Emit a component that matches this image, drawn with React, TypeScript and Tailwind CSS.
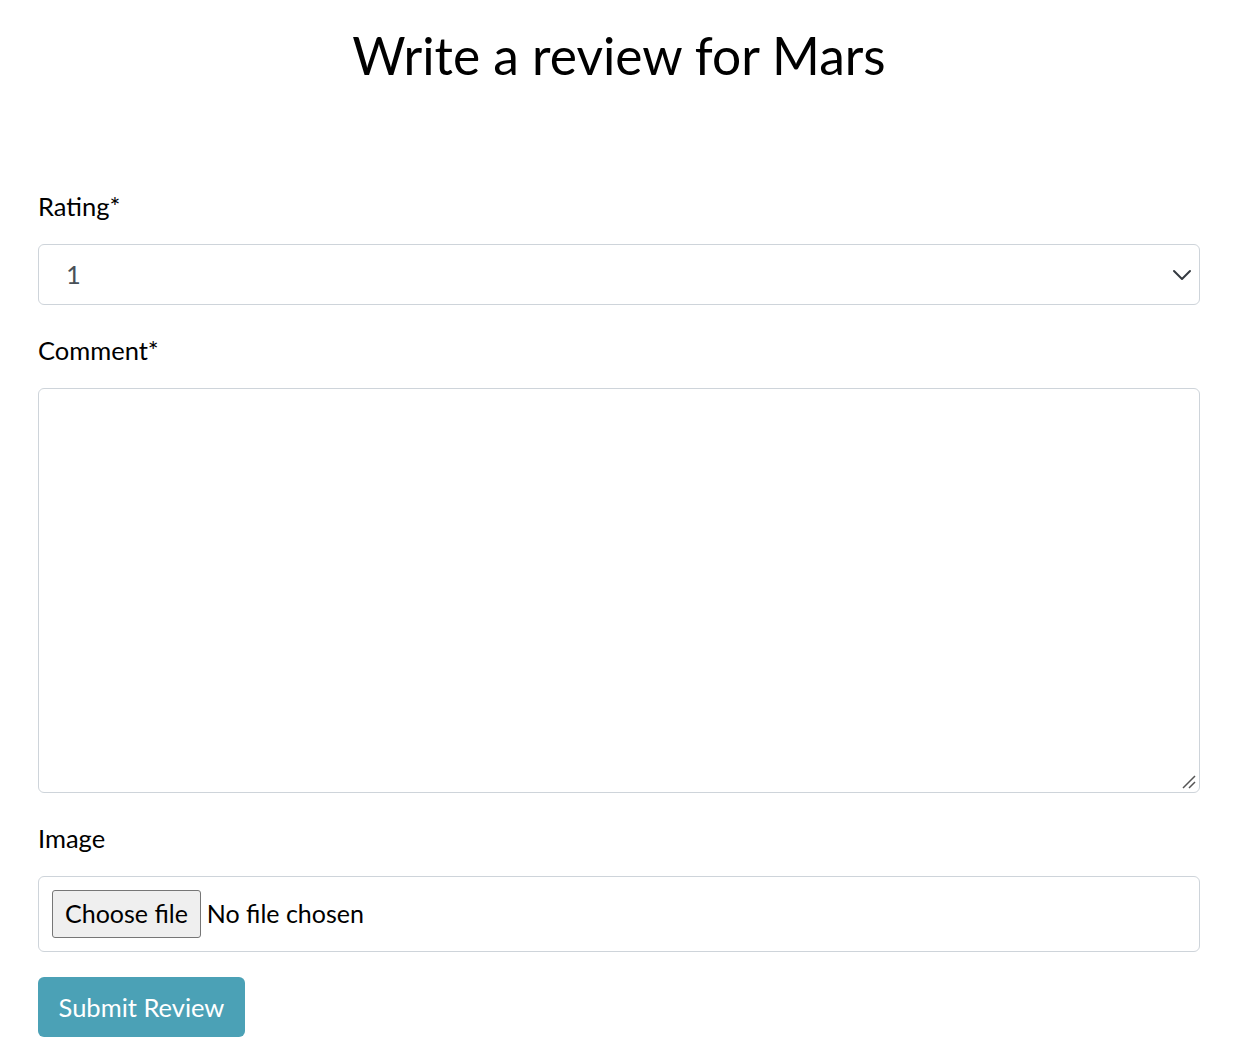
import React from "react";

export default function App() {
  return (
    <div className="min-h-[1060px] bg-white text-black" style={{ fontFamily: "Lato, 'Liberation Sans', sans-serif" }}>
      <div className="pl-[38px] pr-[42px] pt-[24px]">
        <h1 className="text-center text-[51.5px] leading-[62px] font-normal">Write a review for Mars</h1>
        <form className="mt-[102px] flex flex-col">
          <label className="text-[25.5px] leading-[36px]">Rating*</label>
          <div className="mt-[20px] h-[61px] rounded-[6px] border border-[#ced4da] flex items-center justify-between pl-[27px] pr-[7px]">
            <span className="text-[25.5px] text-[#495057]">1</span>
            <svg width="20" height="12" viewBox="0 0 20 12" fill="none">
              <path d="M2 2l8 8 8-8" stroke="#343a40" strokeWidth="2" strokeLinecap="round" strokeLinejoin="round" />
            </svg>
          </div>
          <label className="mt-[27px] text-[25.5px] leading-[36px]">Comment*</label>
          <div className="relative mt-[20px] h-[405px] rounded-[6px] border border-[#ced4da]">
            <svg className="absolute right-[2px] bottom-[2px]" width="16" height="16" viewBox="0 0 16 16">
              <path d="M2 14L14 2M8 14L14 8" stroke="#555" strokeWidth="1.5" />
            </svg>
          </div>
          <label className="mt-[27px] text-[25.5px] leading-[36px]">Image</label>
          <div className="mt-[20px] h-[76px] rounded-[6px] border border-[#ced4da] flex items-center pl-[13px]">
            <span className="h-[48px] px-[12px] flex items-center bg-[#efefef] border border-[#767676] rounded-[3px] text-[25px]">Choose file</span>
            <span className="ml-[6px] text-[25px]">No file chosen</span>
          </div>
          <div className="mt-[25px]">
            <button type="button" className="h-[60px] w-[207px] rounded-[6px] bg-[#4ba1b6] text-white text-[25.5px]">Submit Review</button>
          </div>
        </form>
      </div>
    </div>
  );
}
